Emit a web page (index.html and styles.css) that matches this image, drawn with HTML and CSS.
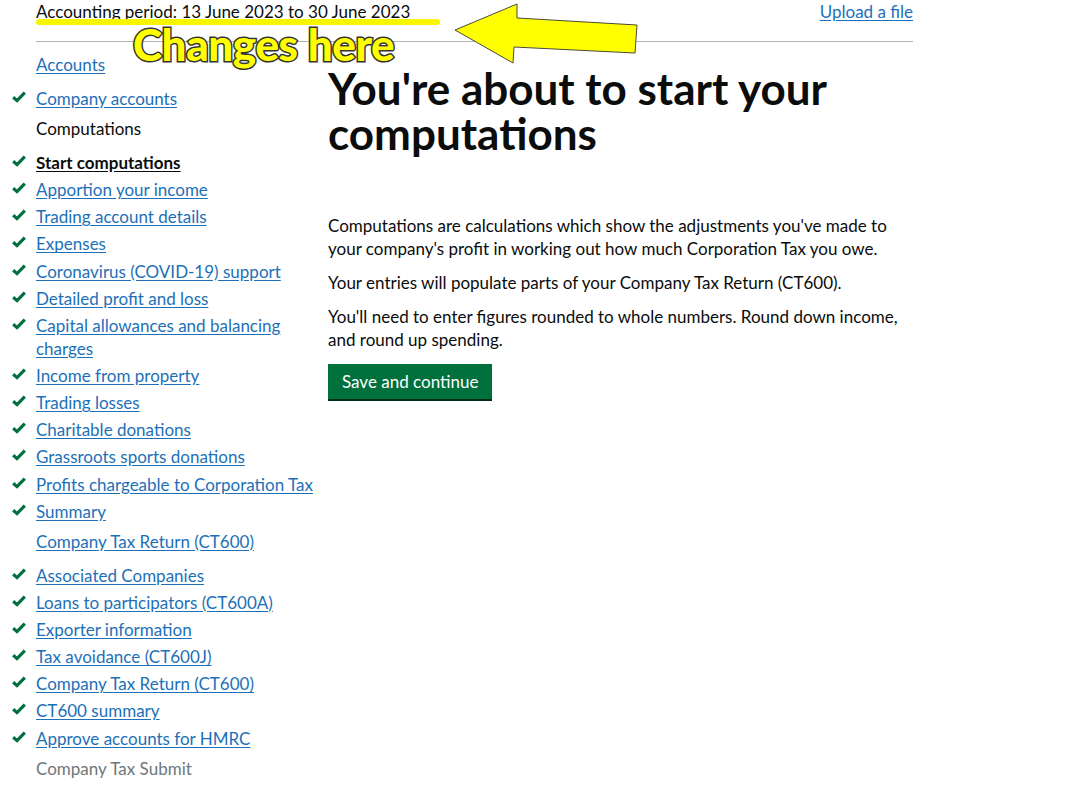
FILE: index.html
```html
<!DOCTYPE html>
<html lang="en">
<head>
	<meta charset="UTF-8">
	<title>Computations</title>
	<link rel="stylesheet" href="styles.css">
</head>
<body>
    <div class="page">
        <div class="top">
            <span class="period">Accounting period: 13 June 2023 to 30 June 2023</span>
            <a href="#" class="upload">Upload a file</a>
            <!-- note drawn over the header -->
            <span class="mark-line"></span>
            <span class="mark-text">Changes here</span>
            <svg class="mark-arrow" width="195" height="68" viewBox="0 0 195 68">
                <polygon points="5,30 67,4 67,18 187,25 185,53 64,47 63,63" fill="#ffff00" stroke="#4a4a3a" stroke-width="1"/>
            </svg>
        </div>

        <div class="cols">
            <ul class="nav">
                <li class="group first"><span class="tick"></span><a href="#">Accounts</a></li>
                <li class="done"><span class="tick"><svg width="14" height="12" viewBox="0 0 14 12"><path d="M1.2 6.2 L5 9.6 L12.8 1.6" fill="none" stroke="#00703c" stroke-width="3.2"/></svg></span><a href="#">Company accounts</a></li>
                <li class="group"><span class="tick"></span><span class="plain">Computations</span></li>
                <li class="done"><span class="tick"><svg width="14" height="12" viewBox="0 0 14 12"><path d="M1.2 6.2 L5 9.6 L12.8 1.6" fill="none" stroke="#00703c" stroke-width="3.2"/></svg></span><a href="#" class="current">Start computations</a></li>
                <li class="done"><span class="tick"><svg width="14" height="12" viewBox="0 0 14 12"><path d="M1.2 6.2 L5 9.6 L12.8 1.6" fill="none" stroke="#00703c" stroke-width="3.2"/></svg></span><a href="#">Apportion your income</a></li>
                <li class="done"><span class="tick"><svg width="14" height="12" viewBox="0 0 14 12"><path d="M1.2 6.2 L5 9.6 L12.8 1.6" fill="none" stroke="#00703c" stroke-width="3.2"/></svg></span><a href="#">Trading account details</a></li>
                <li class="done"><span class="tick"><svg width="14" height="12" viewBox="0 0 14 12"><path d="M1.2 6.2 L5 9.6 L12.8 1.6" fill="none" stroke="#00703c" stroke-width="3.2"/></svg></span><a href="#">Expenses</a></li>
                <li class="done"><span class="tick"><svg width="14" height="12" viewBox="0 0 14 12"><path d="M1.2 6.2 L5 9.6 L12.8 1.6" fill="none" stroke="#00703c" stroke-width="3.2"/></svg></span><a href="#">Coronavirus (COVID-19) support</a></li>
                <li class="done"><span class="tick"><svg width="14" height="12" viewBox="0 0 14 12"><path d="M1.2 6.2 L5 9.6 L12.8 1.6" fill="none" stroke="#00703c" stroke-width="3.2"/></svg></span><a href="#">Detailed profit and loss</a></li>
                <li class="done"><span class="tick"><svg width="14" height="12" viewBox="0 0 14 12"><path d="M1.2 6.2 L5 9.6 L12.8 1.6" fill="none" stroke="#00703c" stroke-width="3.2"/></svg></span><a href="#">Capital allowances and balancing charges</a></li>
                <li class="done"><span class="tick"><svg width="14" height="12" viewBox="0 0 14 12"><path d="M1.2 6.2 L5 9.6 L12.8 1.6" fill="none" stroke="#00703c" stroke-width="3.2"/></svg></span><a href="#">Income from property</a></li>
                <li class="done"><span class="tick"><svg width="14" height="12" viewBox="0 0 14 12"><path d="M1.2 6.2 L5 9.6 L12.8 1.6" fill="none" stroke="#00703c" stroke-width="3.2"/></svg></span><a href="#">Trading losses</a></li>
                <li class="done"><span class="tick"><svg width="14" height="12" viewBox="0 0 14 12"><path d="M1.2 6.2 L5 9.6 L12.8 1.6" fill="none" stroke="#00703c" stroke-width="3.2"/></svg></span><a href="#">Charitable donations</a></li>
                <li class="done"><span class="tick"><svg width="14" height="12" viewBox="0 0 14 12"><path d="M1.2 6.2 L5 9.6 L12.8 1.6" fill="none" stroke="#00703c" stroke-width="3.2"/></svg></span><a href="#">Grassroots sports donations</a></li>
                <li class="done"><span class="tick"><svg width="14" height="12" viewBox="0 0 14 12"><path d="M1.2 6.2 L5 9.6 L12.8 1.6" fill="none" stroke="#00703c" stroke-width="3.2"/></svg></span><a href="#">Profits chargeable to Corporation Tax</a></li>
                <li class="done"><span class="tick"><svg width="14" height="12" viewBox="0 0 14 12"><path d="M1.2 6.2 L5 9.6 L12.8 1.6" fill="none" stroke="#00703c" stroke-width="3.2"/></svg></span><a href="#">Summary</a></li>
                <li class="group"><span class="tick"></span><a href="#">Company Tax Return (CT600)</a></li>
                <li class="done"><span class="tick"><svg width="14" height="12" viewBox="0 0 14 12"><path d="M1.2 6.2 L5 9.6 L12.8 1.6" fill="none" stroke="#00703c" stroke-width="3.2"/></svg></span><a href="#">Associated Companies</a></li>
                <li class="done"><span class="tick"><svg width="14" height="12" viewBox="0 0 14 12"><path d="M1.2 6.2 L5 9.6 L12.8 1.6" fill="none" stroke="#00703c" stroke-width="3.2"/></svg></span><a href="#">Loans to participators (CT600A)</a></li>
                <li class="done"><span class="tick"><svg width="14" height="12" viewBox="0 0 14 12"><path d="M1.2 6.2 L5 9.6 L12.8 1.6" fill="none" stroke="#00703c" stroke-width="3.2"/></svg></span><a href="#">Exporter information</a></li>
                <li class="done"><span class="tick"><svg width="14" height="12" viewBox="0 0 14 12"><path d="M1.2 6.2 L5 9.6 L12.8 1.6" fill="none" stroke="#00703c" stroke-width="3.2"/></svg></span><a href="#">Tax avoidance (CT600J)</a></li>
                <li class="done"><span class="tick"><svg width="14" height="12" viewBox="0 0 14 12"><path d="M1.2 6.2 L5 9.6 L12.8 1.6" fill="none" stroke="#00703c" stroke-width="3.2"/></svg></span><a href="#">Company Tax Return (CT600)</a></li>
                <li class="done"><span class="tick"><svg width="14" height="12" viewBox="0 0 14 12"><path d="M1.2 6.2 L5 9.6 L12.8 1.6" fill="none" stroke="#00703c" stroke-width="3.2"/></svg></span><a href="#">CT600 summary</a></li>
                <li class="done"><span class="tick"><svg width="14" height="12" viewBox="0 0 14 12"><path d="M1.2 6.2 L5 9.6 L12.8 1.6" fill="none" stroke="#00703c" stroke-width="3.2"/></svg></span><a href="#">Approve accounts for HMRC</a></li>
                <li class="group"><span class="tick"></span><span class="muted">Company Tax Submit</span></li>
            </ul>

            <div class="main">
                <h1>You're about to start your computations</h1>
                <p>Computations are calculations which show the adjustments you've made to your company's profit in working out how much Corporation Tax you owe.</p>
                <p>Your entries will populate parts of your Company Tax Return (CT600).</p>
                <p>You'll need to enter figures rounded to whole numbers. Round down income, and round up spending.</p>
                <button class="btn">Save and continue</button>
            </div>
        </div>
    </div>
</body>
</html>
```

FILE: styles.css
```css
*{
    margin: 0;
    padding: 0;
    box-sizing: border-box;
}
body{
    background: #fff;
    color: #0b0c0c;
    font-family: Lato, "Liberation Sans", sans-serif;
    font-size: 17px;
    line-height: 23px;
}
a{
    color: #1d70b8;
    text-decoration: underline;
    text-underline-offset: 2px;
}
.page{
    width: 913px;
    padding-left: 36px;
}

/* header row */
.top{
    position: relative;
    display: flex;
    justify-content: space-between;
    height: 42px;
    border-bottom: 1px solid #b1b4b6;
}
.mark-line{
    position: absolute;
    left: 0;
    top: 19px;
    width: 404px;
    height: 6px;
    border-radius: 3px;
    background: #f8f500;
}
.mark-text{
    position: absolute;
    left: 97px;
    top: 25px;
    font-family: Lato, "DejaVu Sans", sans-serif;
    font-weight: 900;
    font-size: 44px;
    line-height: 38px;
    color: #ffff00;
    -webkit-text-stroke: 3px #333;
    paint-order: stroke fill;
    letter-spacing: -0.4px;
}
.mark-arrow{
    position: absolute;
    left: 414px;
    top: 0;
}

.cols{
    display: flex;
}

/* task list */
.nav{
    list-style: none;
    width: 316px;
    flex: none;
    margin-left: -24px;
    padding-top: 11px;
    padding-right: 8px;
}
.nav li{
    display: flex;
    margin-bottom: 4.15px;
}
.nav .group{
    margin-top: 7px;
    margin-bottom: 11px;
}
.nav .first{
    margin-top: 0;
}
.tick{
    flex: none;
    width: 24px;
    padding-top: 4px;
}
.tick svg{
    display: block;
}
.nav .current{
    color: #0b0c0c;
    font-weight: bold;
}
.muted{
    color: #6f777b;
}

/* page body */
.main{
    flex: 1;
    padding-top: 24px;
}
h1{
    font-size: 44px;
    line-height: 45px;
    font-weight: bold;
    margin-bottom: 58px;
}
.main p{
    margin-bottom: 11px;
    width: 585px;
}
.btn{
    margin-top: 2px;
    font-family: inherit;
    font-size: 17px;
    line-height: 23px;
    color: #fff;
    background: #00703c;
    border: none;
    padding: 6px 14px 6px;
    box-shadow: 0 2px 0 #002d18;
}
```
